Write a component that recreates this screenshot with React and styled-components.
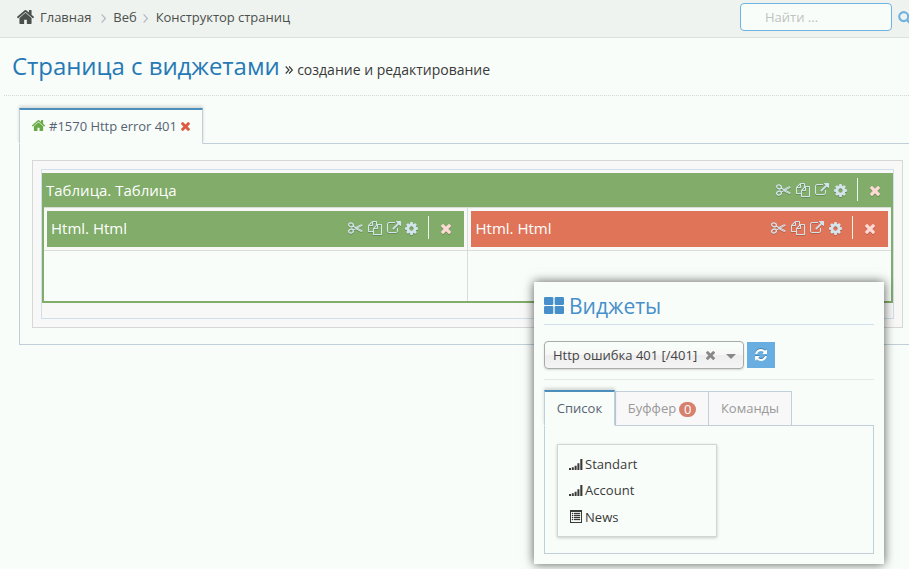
import React from "react";
import styled, { createGlobalStyle, css } from "styled-components";

const GlobalStyle = createGlobalStyle`
  * { box-sizing: border-box; }
  body {
    margin: 0;
    overflow: hidden;
    background: #f8fdf9;
    color: #393939;
    font: 13px/20px "Open Sans", sans-serif;
  }
`;

const paths = {
  copy: "M1696 384q40 0 68 28t28 68v1216q0 40-28 68t-68 28h-960q-40 0-68-28t-28-68v-288h-544q-40 0-68-28t-28-68v-672q0-40 20-88t48-76l408-408q28-28 76-48t88-20h416q40 0 68 28t28 68v328q68-40 128-40h416zm-544 213l-299 299h299v-299zm-640-384l-299 299h299v-299zm196 647l316-316v-416h-384v416q0 40-28 68t-68 28h-416v640h512v-256q0-40 20-88t48-76zm956 804v-1152h-384v416q0 40-28 68t-68 28h-416v640h896z",
  external: "M1408 928v320q0 119-84.5 203.5t-203.5 84.5h-832q-119 0-203.5-84.5t-84.5-203.5v-832q0-119 84.5-203.5t203.5-84.5h704q14 0 23 9t9 23v64q0 14-9 23t-23 9h-704q-66 0-113 47t-47 113v832q0 66 47 113t113 47h832q66 0 113-47t47-113v-320q0-14 9-23t23-9h64q14 0 23 9t9 23zm384-864v512q0 26-19 45t-45 19-45-19l-176-176-652 652q-10 10-23 10t-23-10l-114-114q-10-10-10-23t10-23l652-652-176-176q-19-19-19-45t19-45 45-19h512q26 0 45 19t19 45z",
  cog: "M1152 896q0-106-75-181t-181-75-181 75-75 181 75 181 181 75 181-75 75-181zm512-109v222q0 12-8 23t-20 13l-185 28q-19 54-39 91 35 50 107 138 10 12 10 25t-9 23q-27 37-99 108t-94 71q-12 0-26-9l-138-108q-44 23-91 38-16 136-29 186-7 28-36 28h-222q-14 0-24.5-8.5t-11.5-21.5l-28-184q-49-16-90-37l-141 107q-10 9-25 9-14 0-25-11-126-114-165-168-7-10-7-23 0-12 8-23 15-21 51-66.5t54-70.5q-27-50-41-99l-183-27q-13-2-21-12.5t-8-23.5v-222q0-12 8-23t19-13l186-28q14-46 39-92-40-57-107-138-10-12-10-24 0-10 9-23 26-36 98.5-107.5t94.5-71.5q13 0 26 10l138 107q44-23 91-38 16-136 29-186 7-28 36-28h222q14 0 24.5 8.5t11.5 21.5l28 184q49 16 90 37l142-107q9-9 24-9 13 0 25 10 129 119 165 170 7 8 7 22 0 12-8 23-15 21-51 66.5t-54 70.5q26 50 41 98l183 28q13 2 21 12.5t8 23.5z",
  times: "M1490 1322q0 40-28 68l-136 136q-28 28-68 28t-68-28l-294-294-294 294q-28 28-68 28t-68-28l-136-136q-28-28-28-68t28-68l294-294-294-294q-28-28-28-68t28-68l136-136q28-28 68-28t68 28l294 294 294-294q28-28 68-28t68 28l136 136q28 28 28 68t-28 68l-294 294 294 294q28 28 28 68z",
  home: "M1472 992v480q0 26-19 45t-45 19h-384v-384h-256v384h-384q-26 0-45-19t-19-45v-480q0-1 .5-3t.5-3l575-474 575 474q1 2 1 6zm223-69l-62 74q-8 9-21 11h-3q-13 0-21-7l-692-577-692 577q-12 8-24 7-13-2-21-11l-62-74q-8-10-7-23.5t11-21.5l719-599q32-26 76-26t76 26l244 204v-195q0-14 9-23t23-9h192q14 0 23 9t9 23v408l219 182q10 8 11 21.5t-7 23.5z",
  refresh: "M1639 1056q0 5-1 7-64 268-268 434.5t-478 166.5q-146 0-282.5-55t-243.5-157l-129 129q-19 19-45 19t-45-19-19-45v-448q0-26 19-45t45-19h448q26 0 45 19t19 45-19 45l-137 137q71 66 161 102t187 36q134 0 250-65t186-179q11-17 53-117 8-23 30-23h192q13 0 22.5 9.5t9.5 22.5zm25-800v448q0 26-19 45t-45 19h-448q-26 0-45-19t-19-45 19-45l138-138q-148-137-349-137-134 0-250 65t-186 179q-11 17-53 117-8 23-30 23h-199q-13 0-22.5-9.5t-9.5-22.5v-7q65-268 270-434.5t480-166.5q146 0 284 55.5t245 156.5l130-129q19-19 45-19t45 19 19 45z",
};

const Svg = styled.svg`
  display: block;
  flex: none;
  width: ${(p) => p.$w}px;
  height: ${(p) => p.$h || p.$w}px;
  fill: currentColor;
  overflow: visible;
`;

const Icon = ({ name, size, box = "0 0 1792 1792" }) => (
  <Svg $w={size} viewBox={box} aria-hidden="true"><path d={paths[name]} /></Svg>
);
const HomeIcon = ({ w, h }) => (
  <Svg $w={w} $h={h} viewBox="89 250 1614 1286" preserveAspectRatio="none" aria-hidden="true"><path d={paths.home} /></Svg>
);
const CrossIcon = ({ size }) => <Icon name="times" size={size} box="302 366 1188 1188" />;
const ScissorsIcon = () => (
  <Svg $w={15} $h={12} viewBox="0 0 15 12" aria-hidden="true">
    <g fill="none" stroke="currentColor" strokeWidth="1.3">
      <ellipse cx="3" cy="2.9" rx="2.4" ry="1.9" transform="rotate(22 3 2.9)" />
      <ellipse cx="3" cy="9.1" rx="2.4" ry="1.9" transform="rotate(-22 3 9.1)" />
      <path d="M5 4.2 7.8 5.6 13 2.8 14.4 3.3 5 8.2M5 4 14.4 8.9 13 9.4 7.6 6.6" strokeWidth="1" />
    </g>
  </Svg>
);
const ChevronIcon = () => (
  <Svg $w={5} $h={9} viewBox="0 0 5 9" aria-hidden="true">
    <path d="M.6.4 4.4 4.5.6 8.6" fill="none" stroke="currentColor" strokeWidth="1.2" />
  </Svg>
);
const DoubleAngleIcon = () => (
  <Svg $w={8} $h={8} viewBox="0 0 8 8" aria-hidden="true">
    <path d="M.7.5 4 4 .7 7.5M4.1.5 7.4 4 4.1 7.5" fill="none" stroke="currentColor" strokeWidth="1.15" />
  </Svg>
);
const SearchIcon = () => (
  <Svg $w={14} $h={14} viewBox="0 0 14 14" aria-hidden="true">
    <circle cx="5.7" cy="5.6" r="4.5" fill="none" stroke="currentColor" strokeWidth="2.1" />
    <path d="m9 9 4 4" stroke="currentColor" strokeWidth="2.4" />
  </Svg>
);
const GridIcon = () => (
  <Svg $w={20} $h={17} viewBox="0 0 20 17" aria-hidden="true">
    <rect width="9.3" height="8" rx="1.2" />
    <rect x="10.7" width="9.3" height="8" rx="1.2" />
    <rect y="9" width="9.3" height="8" rx="1.2" />
    <rect x="10.7" y="9" width="9.3" height="8" rx="1.2" />
  </Svg>
);
const SignalIcon = () => (
  <Svg $w={14} $h={11} viewBox="0 0 14 11" aria-hidden="true">
    <path d="M0 9h2v2H0zM2.8 8.2h2V11h-2zM5.6 6.8h2V11h-2zM8.4 4.3h2V11h-2zM11.3 0h2.1v11h-2.1z" />
  </Svg>
);
const ListIcon = () => (
  <Svg $w={12} $h={13} viewBox="0 0 12 13" aria-hidden="true">
    <path fillRule="evenodd" d="M0 0h12v13H0zM1 2v10h10V2z" />
    <path d="M2 3h1v1H2zM4 3h6v1H4zM2 5h1v1H2zM4 5h6v1H4zM2 7h1v1H2zM4 7h6v1H4zM2 9h1v1H2zM4 9h6v1H4z" stroke="currentColor" strokeWidth=".3" />
  </Svg>
);

const Page = styled.div`
  position: relative;
  width: 909px;
  height: 569px;
  overflow: hidden;
`;
const TopBar = styled.header`
  display: flex;
  align-items: flex-start;
  height: 38px;
  padding: 3px 0 0 17px;
  background: #eff3ef;
  border-bottom: 1px solid #dbe1dd;
`;
const Crumbs = styled.nav`
  display: flex;
  align-items: center;
  height: 28px;
  color: #4c504d;
  svg { margin-top: -1px; }
`;
const Crumb = styled.span`
  margin-left: ${(p) => p.$gap}px;
  letter-spacing: -.03px;
  white-space: nowrap;
`;
const Separator = styled.span`
  margin-left: ${(p) => p.$gap}px;
  padding-top: 3px;
  color: #b2b6bf;
`;
const SearchBox = styled.label`
  display: flex;
  width: 152px;
  height: 28px;
  margin-left: auto;
  border: 1px solid #6fb3e0;
  border-radius: 4px;
  background: #f8fdf9;
`;
const SearchInput = styled.input`
  width: 100%;
  padding: 0 8px 0 24px;
  border: 0;
  outline: 0;
  background: none;
  font: 13px "Open Sans", sans-serif;
  &::placeholder { color: #bfc2c0; opacity: 1; }
`;
const SearchButton = styled.span`
  width: 11px;
  margin: 8px 0 0 6px;
  color: #6fb3e0;
`;
const TitleBar = styled.div`
  display: flex;
  align-items: flex-start;
  height: 58px;
  margin-left: 4px;
  padding: 10px 0 0 8px;
  border-bottom: 1px dotted #d3d9d4;
`;
const Title = styled.h1`
  margin: 0;
  color: #2679b5;
  font-size: 24px;
  font-weight: 400;
  line-height: 36px;
  letter-spacing: -.05px;
`;
const Subtitle = styled.span`
  display: flex;
  align-items: center;
  gap: 4px;
  margin: 12px 0 0 5.5px;
  font-size: 14px;
`;
const Tabs = styled.div`
  display: flex;
  align-items: flex-end;
  height: 36px;
  margin-bottom: -1px;
`;
const activeTab = css`
  height: 36px;
  border-top: 2px solid #4c8fbd;
  border-bottom-color: transparent;
  background: #f8fdf9;
  color: #576373;
  box-shadow: 0 -2px 3px rgba(0, 0, 0, .15);
  clip-path: inset(-6px -3px 0 -3px);
`;
const Tab = styled.div`
  display: flex;
  align-items: center;
  justify-content: center;
  width: ${(p) => p.$w}px;
  height: 35px;
  margin-right: ${(p) => (p.$active ? 0 : -1)}px;
  padding-bottom: 2px;
  border: 1px solid #c1d0d8;
  background: #f8f8f8;
  color: #999;
  ${(p) => p.$active && activeTab}
`;
const DocumentTabs = styled.section`
  width: 920px;
  margin: 12px 0 0 19px;
`;
const TabLabel = styled.span`
  margin: 0 4px;
  letter-spacing: -.03px;
`;
const Tone = styled.span`
  padding-top: ${(p) => p.$drop || 0}px;
  color: ${(p) => p.$color};
`;
const DocumentPane = styled.div`
  height: 202px;
  padding: 16px 12px;
  border: 1px solid #c1d0d8;
`;
const Zone = styled.div`
  width: 871px;
  height: 168px;
  padding: 8px;
  border: 1px solid #d5d8d5;
  background: #f8f8f8;
`;
const ZoneInner = styled.div`
  width: 853px;
  height: 150px;
  padding-top: 3px;
  border: 1px solid #d0dfe8;
`;
const TableWidget = styled.div`
  width: 851px;
  height: 130px;
  border: solid #81ac69;
  border-width: 0 2px 2px;
  background: #f8fdf9;
`;
const Bar = styled.div`
  display: flex;
  align-items: center;
  height: ${(p) => p.$h}px;
  padding: 0 ${(p) => p.$right}px ${(p) => p.$lift || 0}px ${(p) => p.$left}px;
  background: ${(p) => (p.$red ? "#e07459" : "#81ac69")};
  color: #fff;
  font-size: 15px;
  line-height: 24px;
`;
const Tools = styled.div`
  display: flex;
  align-items: center;
  margin-left: auto;
  color: #d3e4ed;
  svg { filter: drop-shadow(0 1px 0 rgba(0, 0, 0, .18)); }
`;
const Tool = styled.span`
  display: flex;
  align-items: center;
  justify-content: center;
  width: ${(p) => p.$w}px;
`;
const Divider = styled.span`
  width: 1px;
  height: 23px;
  margin: 0 12px 1px 8px;
  background: #eff5ec;
`;
const CloseTool = styled.span`
  padding-top: 1px;
  color: #ffd9d5;
`;
const Columns = styled.div`
  display: grid;
  grid-template-columns: 424px 423px;
  height: 94px;
  border-top: 1px solid #d8ddd8;
`;
const Column = styled.div`
  border-right: ${(p) => (p.$last ? 0 : 1)}px solid #d8ddd8;
`;
const ColumnHead = styled.div`
  height: 43px;
  padding: 3px;
  border-bottom: 1px solid #d8ddd8;
  background: #f8f8f8;
`;
const Palette = styled.aside`
  position: absolute;
  left: 534px;
  top: 282px;
  width: 350px;
  height: 282px;
  padding: 10px;
  background: #f8fdf9;
  box-shadow: 0 0 10px rgba(0, 0, 0, .65);
`;
const PaletteTitle = styled.h2`
  display: flex;
  align-items: center;
  height: 33px;
  gap: 5px;
  margin: 0;
  padding-bottom: 4px;
  border-bottom: 1px solid #cfe0ea;
  color: #478fca;
  font-size: 21px;
  font-weight: 400;
  line-height: 28px;
  svg { margin-top: -2px; }
`;
const PickerRow = styled.div`
  display: flex;
  align-items: center;
  height: 55px;
  gap: 3px;
  padding-top: 6px;
  border-bottom: 1px solid #e2eae5;
`;
const Picker = styled.div`
  display: flex;
  align-items: center;
  width: 200px;
  height: 28px;
  padding-left: 8px;
  border: 1px solid #aaa;
  border-radius: 4px;
  background: linear-gradient(#f8fdf9 20%, #f6f6f6 50%, #eee 52%, #f4f4f4);
  box-shadow: 0 1px 2px rgba(0, 0, 0, .15);
  color: #444;
`;
const PickerClear = styled.span`
  margin-left: 9px;
  color: #888;
`;
const Caret = styled.span`
  margin: 2px 0 0 10.5px;
  border: solid transparent;
  border-width: 5px 5px 0;
  border-top-color: #888;
`;
const RefreshButton = styled.button`
  display: flex;
  align-items: center;
  justify-content: center;
  width: 28px;
  height: 26px;
  padding: 0;
  border: 0;
  background: #68aee0;
  color: #fff;
  svg { filter: drop-shadow(0 -1px 0 rgba(0, 0, 0, .25)); }
`;
const PaletteTabs = styled.div`
  margin-top: 10px;
`;
const Badge = styled.span`
  display: flex;
  align-items: center;
  justify-content: center;
  width: 17px;
  height: 15px;
  margin: 3px 0 0 3px;
  border-radius: 8px;
  background: #d6806d;
  color: #fff;
  font-size: 13px;
`;
const PalettePane = styled.div`
  height: 129px;
  padding: 18px 12px;
  border: 1px solid #c1d0d8;
`;
const WidgetList = styled.ul`
  width: 160px;
  height: 93px;
  margin: 0;
  padding: 6px 11px;
  border: 1px solid #d2d5d2;
  box-shadow: 0 1px 3px rgba(0, 0, 0, .2);
  list-style: none;
`;
const WidgetItem = styled.li`
  display: flex;
  align-items: center;
  height: 26.3px;
  gap: 2px;
  letter-spacing: .04px;
`;
const IconCell = styled.span`
  display: flex;
  justify-content: center;
  width: 14px;
`;

const WidgetBar = ({ title, ...bar }) => (
  <Bar {...bar}>
    {title}
    <Tools>
      <Tool $w={20}><ScissorsIcon /></Tool>
      <Tool $w={19}><Icon name="copy" size={14} /></Tool>
      <Tool $w={19}><Icon name="external" size={14} /></Tool>
      <Tool $w={17}><Icon name="cog" size={15} /></Tool>
      <Divider />
      <CloseTool><CrossIcon size={10} /></CloseTool>
    </Tools>
  </Bar>
);

export default function App() {
  return (
    <Page>
      <GlobalStyle />
      <TopBar>
        <Crumbs>
          <HomeIcon w={17} h={14} />
          <Crumb $gap={6}>Главная</Crumb>
          <Separator $gap={10}><ChevronIcon /></Separator>
          <Crumb $gap={7}>Веб</Crumb>
          <Separator $gap={6}><ChevronIcon /></Separator>
          <Crumb $gap={8}>Конструктор страниц</Crumb>
        </Crumbs>
        <SearchBox><SearchInput placeholder="Найти ..." /></SearchBox>
        <SearchButton><SearchIcon /></SearchButton>
      </TopBar>
      <TitleBar>
        <Title>Страница с виджетами</Title>
        <Subtitle><DoubleAngleIcon />создание и редактирование</Subtitle>
      </TitleBar>
      <DocumentTabs>
        <Tabs>
          <Tab $active $w={184}>
            <Tone $color="#69aa46"><HomeIcon w={13} h={11} /></Tone>
            <TabLabel>#1570 Http error 401</TabLabel>
            <Tone $color="#dd5a43" $drop={2}><CrossIcon size={9} /></Tone>
          </Tab>
        </Tabs>
        <DocumentPane>
          <Zone>
            <ZoneInner>
              <TableWidget>
                <WidgetBar title="Таблица. Таблица" $h={34} $left={2} $right={11.5} />
                <Columns>
                  <Column>
                    <ColumnHead><WidgetBar title="Html. Html" $h={36} $left={4} $right={13} $lift={2} /></ColumnHead>
                  </Column>
                  <Column $last>
                    <ColumnHead><WidgetBar $red title="Html. Html" $h={36} $left={4.5} $right={13.5} $lift={2} /></ColumnHead>
                  </Column>
                </Columns>
              </TableWidget>
            </ZoneInner>
          </Zone>
        </DocumentPane>
      </DocumentTabs>
      <Palette>
        <PaletteTitle><GridIcon />Виджеты</PaletteTitle>
        <PickerRow>
          <Picker>
            Http ошибка 401 [/401]
            <PickerClear><CrossIcon size={9} /></PickerClear>
            <Caret />
          </Picker>
          <RefreshButton aria-label="Обновить"><Icon name="refresh" size={14} /></RefreshButton>
        </PickerRow>
        <PaletteTabs>
          <Tabs>
            <Tab $active $w={71}>Список</Tab>
            <Tab $w={94}>Буффер<Badge>0</Badge></Tab>
            <Tab $w={84}>Команды</Tab>
          </Tabs>
          <PalettePane>
            <WidgetList>
              <WidgetItem><IconCell><SignalIcon /></IconCell>Standart</WidgetItem>
              <WidgetItem><IconCell><SignalIcon /></IconCell>Account</WidgetItem>
              <WidgetItem><IconCell><ListIcon /></IconCell>News</WidgetItem>
            </WidgetList>
          </PalettePane>
        </PaletteTabs>
      </Palette>
    </Page>
  );
}
